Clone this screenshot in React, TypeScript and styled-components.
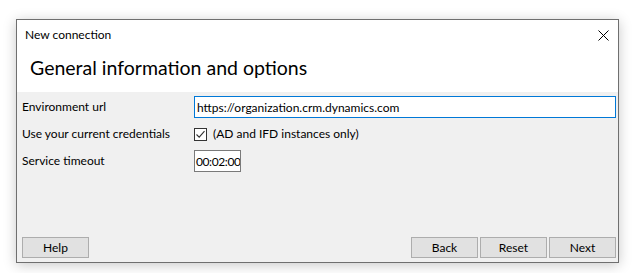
import styled, { createGlobalStyle } from "styled-components";

const GlobalStyle = createGlobalStyle`
  html, body {
    margin: 0;
    padding: 0;
    background: #ffffff;
  }
  body {
    font-family: Lato, "Noto Sans", "Liberation Sans", sans-serif;
    font-size: 12px;
    color: #000000;
  }
`;

const Page = styled.div`
  width: 632px;
  height: 273px;
  padding: 19px 0 0 16px;
  box-sizing: border-box;
`;

const Window = styled.div`
  width: 603px;
  height: 244px;
  box-sizing: border-box;
  border: 1px solid #6f6f6f;
  background: #f0f0f0;
  box-shadow: 0 2px 12px rgba(0, 0, 0, 0.22);
  display: flex;
  flex-direction: column;
`;

const Header = styled.div`
  background: #ffffff;
  height: 72px;
  display: flex;
  flex-direction: column;
`;

const TitleBar = styled.div`
  height: 30px;
  display: flex;
  align-items: center;
  justify-content: space-between;
  padding: 0 9px 0 8px;
`;

const Caption = styled.span`
  font-size: 12px;
  line-height: 1;
`;

const CloseButton = styled.div`
  width: 12px;
  height: 12px;
  display: flex;
  align-items: center;
  justify-content: center;
`;

const Heading = styled.h1`
  margin: 0;
  padding: 6px 0 0 13px;
  font-size: 19.5px;
  font-weight: 400;
  line-height: 24px;
`;

const Body = styled.div`
  flex: 1;
  display: flex;
  flex-direction: column;
  justify-content: space-between;
  padding: 4px 2px 4px 5px;
`;

const Form = styled.div`
  display: grid;
  grid-template-columns: 172px 1fr;
  grid-auto-rows: 22px;
  row-gap: 5px;
  align-items: center;
`;

const Label = styled.span`
  font-size: 12px;
  line-height: 14px;
`;

const TextInput = styled.div<{ focused?: boolean; width?: number }>`
  box-sizing: border-box;
  height: 22px;
  width: ${({ width }) => (width ? `${width}px` : "100%")};
  border: 1px solid ${({ focused }) => (focused ? "#0078d7" : "#7a7a7a")};
  background: #ffffff;
  display: flex;
  align-items: center;
  padding-left: ${({ width }) => (width ? "1px" : "2px")};
  letter-spacing: ${({ width }) => (width ? "-0.4px" : "0")};
  overflow: hidden;
  white-space: nowrap;
  font-size: 12px;
`;

const CheckRow = styled.label`
  display: flex;
  align-items: center;
  gap: 6px;
  height: 22px;
`;

const Box = styled.span`
  width: 13px;
  height: 13px;
  box-sizing: border-box;
  border: 1px solid #333333;
  background: #ffffff;
  display: flex;
  align-items: center;
  justify-content: center;
`;

const Spacer = styled.div`
  height: 28px;
`;

const Footer = styled.div`
  display: flex;
  justify-content: space-between;
`;

const ButtonGroup = styled.div`
  display: flex;
  gap: 2px;
`;

const Button = styled.button`
  width: 67px;
  height: 21px;
  box-sizing: border-box;
  border: 1px solid #adadad;
  background: #e1e1e1;
  font-family: Lato, "Noto Sans", "Liberation Sans", sans-serif;
  font-size: 12px;
  color: #000000;
  padding: 0;
  display: flex;
  align-items: center;
  justify-content: center;
`;

export default function App() {
  return (
    <>
      <GlobalStyle />
      <Page>
        <Window>
          <Header>
            <TitleBar>
              <Caption>New connection</Caption>
              <CloseButton>
                <svg width="11" height="11" viewBox="0 0 11 11">
                  <path d="M0.5 0.5 L10.5 10.5 M10.5 0.5 L0.5 10.5" stroke="#000" strokeWidth="1" />
                </svg>
              </CloseButton>
            </TitleBar>
            <Heading>General information and options</Heading>
          </Header>
          <Body>
            <Form>
              <Label>Environment url</Label>
              <TextInput focused>https://organization.crm.dynamics.com</TextInput>
              <Label>Use your current credentials</Label>
              <CheckRow>
                <Box>
                  <svg width="11" height="11" viewBox="0 0 11 11">
                    <path d="M1.5 5.5 L4.2 8.2 L9.5 2.2" stroke="#333" strokeWidth="1.1" fill="none" />
                  </svg>
                </Box>
                <Label>(AD and IFD instances only)</Label>
              </CheckRow>
              <Label>Service timeout</Label>
              <TextInput width={47}>00:02:00</TextInput>
            </Form>
            <Spacer />
            <Footer>
              <Button>Help</Button>
              <ButtonGroup>
                <Button>Back</Button>
                <Button>Reset</Button>
                <Button>Next</Button>
              </ButtonGroup>
            </Footer>
          </Body>
        </Window>
      </Page>
    </>
  );
}
